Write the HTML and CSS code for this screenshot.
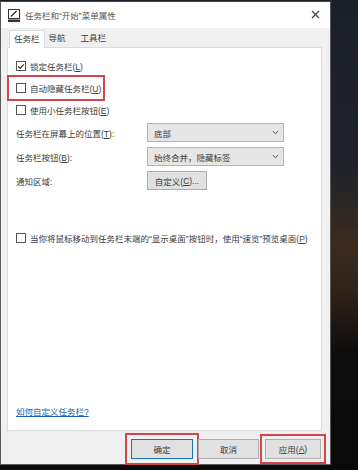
FILE: index.html
```html
<!DOCTYPE html>
<html lang="zh-CN">
<head>
<meta charset="utf-8">
<title>任务栏和“开始”菜单属性</title>
<link rel="stylesheet" href="styles.css">
</head>
<body>
<div class="window">
  <div class="titlebar">
    <svg class="app-icon" width="12" height="13" viewBox="0 0 12 13">
      <rect x="0.5" y="0.5" width="11" height="9" fill="#fff" stroke="#333" stroke-width="1"/>
      <path d="M3 7.5 L8.5 2" stroke="#333" stroke-width="1.4"/>
      <rect x="0" y="10.5" width="12" height="2.5" fill="#333"/>
    </svg>
    <span class="title">任务栏和“开始”菜单属性</span>
    <svg class="close" width="9" height="9" viewBox="0 0 9 9">
      <path d="M1 1 L8 8 M8 1 L1 8" stroke="#444" stroke-width="1.2"/>
    </svg>
  </div>
  <div class="client">
    <div class="tabs">
      <div class="tab active">任务栏</div>
      <div class="tab">导航</div>
      <div class="tab tab-last">工具栏</div>
    </div>
    <div class="panel">
      <div class="check-row"><span class="box checked"><svg width="9" height="9" viewBox="0 0 9 9"><path d="M1.5 4.5 L3.6 6.6 L7.6 2" fill="none" stroke="#333" stroke-width="1.2"/></svg></span><span>锁定任务栏(<u>L</u>)</span></div>
      <div class="check-row highlight"><span class="box"></span><span>自动隐藏任务栏(<u>U</u>)</span></div>
      <div class="check-row"><span class="box"></span><span>使用小任务栏按钮(<u>E</u>)</span></div>
      <div class="form">
        <div class="form-row"><span class="label">任务栏在屏幕上的位置(<u>T</u>):</span><div class="select"><span>底部</span><svg class="chev" width="7" height="5" viewBox="0 0 7 5"><path d="M0.8 1 L3.5 3.8 L6.2 1" fill="none" stroke="#555" stroke-width="1"/></svg></div></div>
        <div class="form-row"><span class="label">任务栏按钮(<u>B</u>):</span><div class="select"><span>始终合并，隐藏标签</span><svg class="chev" width="7" height="5" viewBox="0 0 7 5"><path d="M0.8 1 L3.5 3.8 L6.2 1" fill="none" stroke="#555" stroke-width="1"/></svg></div></div>
        <div class="form-row"><span class="label">通知区域:</span><div class="btn small">自定义(<u>C</u>)...</div></div>
      </div>
      <div class="check-row peek"><span class="box"></span><span>当你将鼠标移动到任务栏末端的“显示桌面”按钮时，使用“速览”预览桌面(<u>P</u>)</span></div>
      <a class="link" href="#">如何自定义任务栏?</a>
    </div>
  </div>
  <div class="footer">
    <div class="btn ok mark">确定</div>
    <div class="btn">取消</div>
    <div class="btn apply mark2">应用(<u>A</u>)</div>
  </div>
</div>
</body>
</html>
```
FILE: styles.css
```css
html, body {
  margin: 0;
  padding: 0;
}
body {
  width: 358px;
  height: 470px;
  overflow: hidden;
  background: linear-gradient(180deg, #1b1f27 0%, #1f222a 35%, #3a2b1f 52%, #2e2219 62%, #0e0d0d 75%, #0a0a0a 100%);
  font-family: "Liberation Sans", "Noto Sans CJK SC", sans-serif;
  font-size: 8.5px;
  color: #3a3a3a;
}
.window {
  box-sizing: border-box;
  width: 331px;
  height: 464px;
  margin-top: 1px;
  border: 1px solid #5a5a5a;
  border-top-color: #444;
  background: #f0f0f0;
  display: flex;
  flex-direction: column;
}
.titlebar {
  height: 26px;
  background: #fff;
  display: flex;
  align-items: center;
  padding: 0 10px 0 7px;
  flex: none;
}
.app-icon {
  flex: none;
  margin-right: 5px;
}
.title {
  color: #555;
  flex: 1;
}
.close {
  flex: none;
  margin-bottom: 2px;
}
.client {
  flex: 1;
  display: flex;
  flex-direction: column;
  padding: 0 8px 0 6px;
}
.tabs {
  height: 19px;
  display: flex;
  align-items: flex-end;
  padding-left: 2px;
  flex: none;
}
.tab {
  height: 17px;
  line-height: 16px;
  padding: 0 4px;
  box-sizing: border-box;
}
.tab.active {
  background: #fff;
  border: 1px solid #dcdcdc;
  border-bottom: none;
  height: 18px;
  margin-bottom: -1px;
  position: relative;
}
.tab-last {
  margin-left: 7px;
}
.panel {
  flex: 1;
  background: #fff;
  border: 1px solid #dcdcdc;
  display: flex;
  flex-direction: column;
  padding: 7px 8px 12px 8px;
}
.check-row {
  height: 22px;
  display: flex;
  align-items: center;
  white-space: nowrap;
}
.box {
  box-sizing: border-box;
  width: 10px;
  height: 10px;
  border: 1px solid #555;
  background: #fff;
  margin-right: 4px;
  flex: none;
  display: flex;
  align-items: center;
  justify-content: center;
}
.check-row.highlight {
  align-self: flex-start;
  outline: 2px solid #d2454f;
  outline-offset: 1px;
  height: 20px;
  margin: 1px 0 1px -6px;
  padding: 0 1px 0 6px;
}
.form {
  display: flex;
  flex-direction: column;
  gap: 5px;
  margin-top: 2px;
}
.form-row {
  display: flex;
  align-items: center;
  height: 19px;
}
.label {
  width: 131px;
  flex: none;
}
.select {
  box-sizing: border-box;
  width: 137px;
  height: 19px;
  background: #e6e6e6;
  border: 1px solid #b4b4b4;
  display: flex;
  align-items: center;
  justify-content: space-between;
  padding: 0 4px 0 6px;
}
.chev {
  flex: none;
}
.btn {
  box-sizing: border-box;
  height: 20px;
  background: #e1e1e1;
  border: 1px solid #adadad;
  display: flex;
  align-items: center;
  justify-content: center;
}
.btn.small {
  width: 60px;
  height: 19px;
}
.peek {
  margin-top: 40px;
  height: 16px;
}
.link {
  margin-top: auto;
  color: #1a5fb4;
  text-decoration: underline;
  align-self: flex-start;
  line-height: 12px;
}
.footer {
  height: 33px;
  flex: none;
  display: flex;
  align-items: flex-start;
  justify-content: flex-end;
  padding: 8px 9px 0 0;
  box-sizing: border-box;
  gap: 5px;
}
.footer .btn {
  width: 61px;
}
.footer .btn.ok {
  border: 1px solid #1a6fc9;
  width: 62px;
}
.footer .btn.apply {
  width: 56px;
  margin-left: 1px;
}
.mark {
  outline: 2px solid #d2454f;
  outline-offset: 4px;
}
.mark2 {
  outline: 2px solid #d2454f;
  outline-offset: 3px;
}
u {
  text-decoration: underline;
}
```
